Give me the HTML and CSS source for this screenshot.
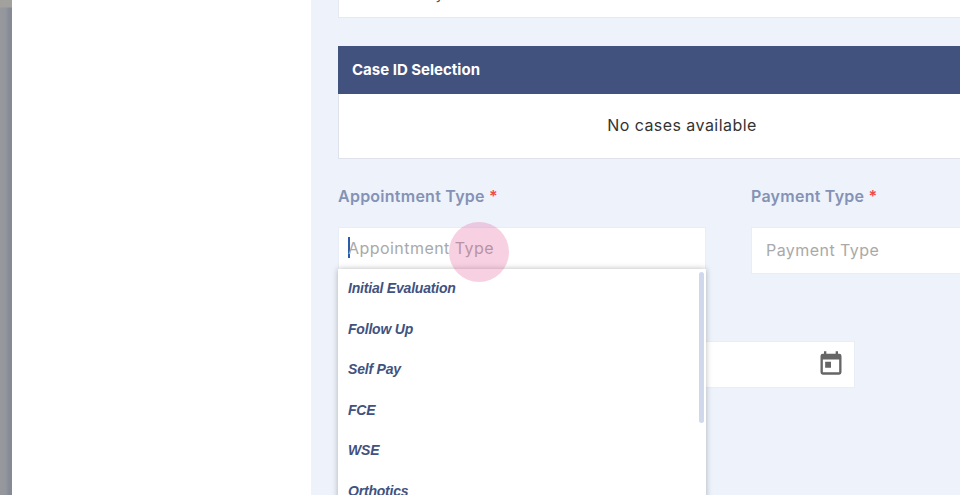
FILE: index.html
```html
<!DOCTYPE html>
<html lang="en">
<head>
    <meta charset="UTF-8">
    <meta name="viewport" content="width=device-width, initial-scale=1.0">
    <title>Appointment</title>
    <link rel="stylesheet" href="styles.css">
</head>
<body>
    <div class="backdrop"></div>
    <div class="side-panel"></div>

    <div class="main">
        <!-- Card cut off by the top of the window -->
        <div class="top-card">
            <span class="top-card-text">Active Policy</span>
        </div>

        <div class="case-box">
            <div class="case-header">Case ID Selection</div>
            <div class="case-body">No cases available</div>
        </div>

        <div class="form-row">
            <div class="field field-appointment">
                <label class="field-label">Appointment Type <span class="required">*</span></label>
                <div class="field-input field-input-active">
                    <span class="caret"></span>
                    <span class="placeholder placeholder-active">Appointment Type</span>
                </div>
                <div class="dropdown">
                    <div class="dropdown-item">Initial Evaluation</div>
                    <div class="dropdown-item">Follow Up</div>
                    <div class="dropdown-item">Self Pay</div>
                    <div class="dropdown-item">FCE</div>
                    <div class="dropdown-item">WSE</div>
                    <div class="dropdown-item">Orthotics</div>
                    <div class="dropdown-thumb"></div>
                </div>
                <div class="touch-dot"></div>
            </div>
            <div class="field field-payment">
                <label class="field-label">Payment Type <span class="required">*</span></label>
                <div class="field-input">
                    <span class="placeholder placeholder-payment">Payment Type</span>
                </div>
            </div>
        </div>

        <div class="date-input">
            <svg class="calendar-icon" viewBox="0 0 24 24" width="28" height="28">
                <path fill="#666" d="M19 4h-1V2h-2v2H8V2H6v2H5a2 2 0 0 0-2 2v14a2 2 0 0 0 2 2h14a2 2 0 0 0 2-2V6a2 2 0 0 0-2-2zm0 16H5V9h14v11zM7 11h5v5H7z"/>
            </svg>
        </div>
    </div>
</body>
</html>
```

FILE: styles.css
```css
html, body {
    height: 100%;
}
body {
    margin: 0;
    display: flex;
    overflow: hidden;
    font-family: "Inter", "Open Sans", sans-serif;
    background-color: #eef3fb;
}
.backdrop {
    width: 12px;
    flex-shrink: 0;
    background:
        linear-gradient(180deg, #a3a19e 0, #a3a19e 7px, transparent 8px),
        linear-gradient(90deg, #96989d 0, #93969c 6px, #858a95 9px, #858a95 100%);
}
.side-panel {
    width: 299px;
    flex-shrink: 0;
    background-color: #fff;
}
.main {
    flex: 1;
    padding-left: 27px;
    min-width: 0;
}
.top-card {
    height: 17px;
    margin-right: -66px;
    padding-left: 14px;
    background-color: #fff;
    border: 1px solid #e6e9f0;
    border-top: none;
    overflow: hidden;
    margin-bottom: 28px;
}
.top-card-text {
    display: block;
    margin-top: -16px;
    font-size: 15px;
    line-height: 20px;
    color: #555;
}
.case-box {
    margin-right: -66px;
}
.case-header {
    height: 48px;
    line-height: 48px;
    padding-left: 14px;
    background-color: #41527f;
    color: #fff;
    font-size: 15px;
    font-weight: 700;
}
.case-body {
    height: 64px;
    line-height: 62px;
    background-color: #fff;
    border: 1px solid #dfe2ea;
    border-top: none;
    text-align: center;
    font-size: 16px;
    letter-spacing: 0.45px;
    color: #333;
}
.form-row {
    display: flex;
    gap: 45px;
    margin-top: 26px;
}
.field {
    position: relative;
    flex-shrink: 0;
}
.field-appointment {
    width: 368px;
}
.field-payment {
    width: 300px;
}
.field-label {
    display: block;
    height: 42px;
    line-height: 22px;
    font-size: 16px;
    font-weight: 600;
    letter-spacing: 0.25px;
    color: #8492b5;
}
.required {
    color: #f0484c;
}
.field-input {
    display: flex;
    align-items: center;
    box-sizing: border-box;
    height: 47px;
    padding-left: 14px;
    padding-bottom: 2px;
    background-color: #fff;
    border: 1px solid #e9edf5;
}
.field-input-active {
    padding-left: 9px;
    padding-bottom: 6px;
}
.caret {
    width: 2px;
    height: 21px;
    background-color: #2a5cab;
}
.placeholder {
    font-size: 16px;
    letter-spacing: 0.45px;
    color: #a9a9a9;
}
.placeholder-active {
    margin-left: -2px;
}
.dropdown {
    position: absolute;
    top: 84px;
    left: 0;
    width: 368px;
    height: 240px;
    overflow: hidden;
    background-color: #fff;
    box-shadow: 0 0 6px rgba(0, 0, 0, 0.28);
}
.dropdown-item {
    height: 40.5px;
    line-height: 38px;
    padding-left: 10px;
    font-family: "Liberation Sans", Arial, sans-serif;
    font-size: 14px;
    letter-spacing: -0.2px;
    font-weight: 700;
    font-style: italic;
    color: #41527f;
}
.dropdown-thumb {
    position: absolute;
    top: 3px;
    right: 2px;
    width: 5px;
    height: 151px;
    border-radius: 3px;
    background-color: #d0d9ec;
}
.touch-dot {
    position: absolute;
    top: 37px;
    left: 111px;
    width: 60px;
    height: 60px;
    border-radius: 50%;
    background-color: rgba(225, 90, 150, 0.28);
}
.date-input {
    display: flex;
    align-items: center;
    justify-content: flex-end;
    box-sizing: border-box;
    width: 517px;
    height: 47px;
    margin-top: 67px;
    padding-right: 9px;
    padding-bottom: 3px;
    background-color: #fff;
    border: 1px solid #e9edf5;
}
```
